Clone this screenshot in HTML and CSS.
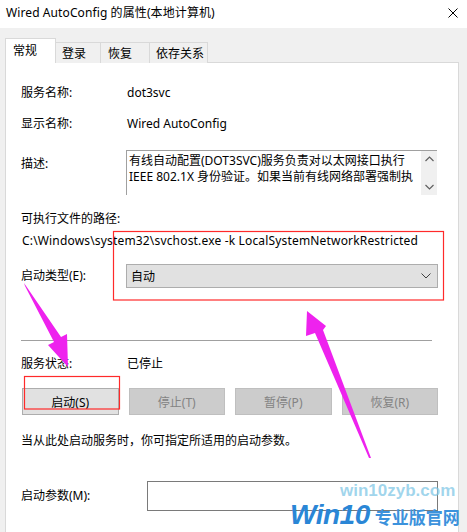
FILE: index.html
```html
<!DOCTYPE html>
<html lang="zh-CN">
<head>
<meta charset="utf-8">
<title>Wired AutoConfig 的属性(本地计算机)</title>
<link rel="stylesheet" href="styles.css">
</head>
<body>
<div class="window">
  <div class="titlebar">
    <span class="title">Wired AutoConfig 的属性(本地计算机)</span>
    <svg class="close" width="10" height="10" viewBox="0 0 10 10"><path d="M0.5 0.5 L9.5 9.5 M9.5 0.5 L0.5 9.5" stroke="#000" stroke-width="1" fill="none"/></svg>
  </div>
  <div class="tabs">
    <div class="tab tab-active w1">常规</div>
    <div class="tab w2">登录</div>
    <div class="tab w3">恢复</div>
    <div class="tab w4">依存关系</div>
  </div>
  <div class="panel">
    <div class="row r-name"><span class="label">服务名称:</span><span class="value">dot3svc</span></div>
    <div class="row r-display"><span class="label">显示名称:</span><span class="value">Wired AutoConfig</span></div>
    <div class="row r-desc">
      <span class="label desc-label">描述:</span>
      <div class="desc-box">
        <div class="desc-text">
          <div>有线自动配置(DOT3SVC)服务负责对以太网接口执行</div>
          <div>IEEE 802.1X 身份验证。如果当前有线网络部署强制执</div>
        </div>
        <div class="scrollbar">
          <svg width="9" height="6" viewBox="0 0 9 6"><path d="M0.5 5 L4.5 1 L8.5 5" stroke="#606060" stroke-width="1.2" fill="none"/></svg>
          <svg width="9" height="6" viewBox="0 0 9 6"><path d="M0.5 1 L4.5 5 L8.5 1" stroke="#606060" stroke-width="1.2" fill="none"/></svg>
        </div>
      </div>
    </div>
    <div class="plain r-pathlabel">可执行文件的路径:</div>
    <div class="plain r-path">C:\Windows\system32\svchost.exe -k LocalSystemNetworkRestricted</div>
    <div class="row r-type">
      <span class="label">启动类型(E):</span>
      <div class="combo"><span>自动</span>
        <svg width="10" height="6" viewBox="0 0 10 6"><path d="M0.5 0.5 L5 5 L9.5 0.5" stroke="#404040" stroke-width="1" fill="none"/></svg>
      </div>
    </div>
    <div class="separator"></div>
    <div class="row r-status"><span class="label">服务状态:</span><span class="value">已停止</span></div>
    <div class="buttons">
      <div class="btn">启动(S)</div>
      <div class="btn btn-disabled">停止(T)</div>
      <div class="btn btn-disabled">暂停(P)</div>
      <div class="btn btn-disabled">恢复(R)</div>
    </div>
    <div class="plain r-hint">当从此处启动服务时，你可指定所适用的启动参数。</div>
    <div class="row r-param">
      <span class="label label-wide">启动参数(M):</span>
      <div class="input"></div>
    </div>
  </div>

  <div class="watermark">
    <div class="wm-url">win10zyb.com</div>
    <div class="wm-brand"><span class="wm-win">Win10</span><span class="wm-cn">专业版官网</span></div>
  </div>

  <svg class="annot" width="467" height="532" viewBox="0 0 467 532">
    <rect x="113.5" y="231.5" width="330" height="68.5" fill="none" stroke="#ff2a2a" stroke-width="1.2"/>
    <rect x="24.5" y="376.5" width="95" height="32.5" fill="none" stroke="#ff2a2a" stroke-width="1.2"/>
    <polygon points="24,283 61,337 67,334 68,367 48,345 54,342 25,286" fill="#ee22ee"/>
    <polygon points="371,458 323,330 326,326 307,311 306,336 315,333 369,458" fill="#ee22ee"/>
  </svg>
</div>
</body>
</html>
```
FILE: styles.css
```css
* { box-sizing: border-box; }
html, body { margin: 0; padding: 0; }
body {
  width: 467px;
  height: 532px;
  overflow: hidden;
  background: #f0f0f0;
  font-family: "Noto Sans", "Noto Sans CJK SC", sans-serif;
  font-size: 12px;
  color: #000;
}
.window {
  position: relative;
  width: 467px;
  height: 532px;
  overflow: hidden;
}
.titlebar {
  height: 28px;
  background: #fff;
  display: flex;
  align-items: center;
  justify-content: space-between;
  padding: 0 9px 2px 6px;
}
.title { font-size: 12px; line-height: 16px; letter-spacing: 0.1px; }
.close { display: block; }

.tabs {
  display: flex;
  align-items: flex-end;
  height: 34px;
  padding-left: 5px;
  position: relative;
  z-index: 2;
}
.tab {
  height: 21px;
  margin-bottom: -1px;
  background: #f0f0f0;
  border: 1px solid #d9d9d9;
  border-bottom: none;
  border-left: none;
  padding: 3px 0 0 6px;
  line-height: 16px;
}
.tab-active {
  height: 25px;
  background: #fff;
  border-left: 1px solid #d9d9d9;
  padding: 4px 0 0 7px;
}
.w1 { width: 51px; }
.w2 { width: 45px; }
.w3 { width: 49px; padding-left: 7px; }
.w4 { width: 58px; }

.panel {
  position: relative;
  z-index: 1;
  margin-left: 5px;
  width: 454px;
  height: 480px;
  background: #fff;
  border: 1px solid #d9d9d9;
  border-bottom: none;
  padding: 22px 0 0 15px;
}
.row { display: flex; align-items: center; }
.label { width: 105px; flex: none; line-height: 16px; }
.value { line-height: 16px; padding-left: 1px; }
.plain { line-height: 16px; }

.r-name { height: 16px; }
.r-display { height: 16px; margin-top: 15px; }
.r-desc { align-items: flex-start; margin-top: 18px; height: 45px; }
.desc-label { padding-top: 6px; }
.desc-box {
  width: 311px;
  height: 45px;
  border-top: 1px solid #a0a0a0;
  border-left: 1px solid #a0a0a0;
  display: flex;
}
.desc-text {
  flex: 1;
  overflow: hidden;
  white-space: nowrap;
  padding: 2px 0 0 2px;
  line-height: 16px;
}
.scrollbar {
  width: 16px;
  flex: none;
  background: #f0f0f0;
  display: flex;
  flex-direction: column;
  justify-content: space-between;
  align-items: center;
  padding: 5px 0 5px;
}
.scrollbar svg { display: block; }

.r-pathlabel { margin-top: 16px; }
.r-path { margin-top: 6px; padding-left: 1px; white-space: nowrap; letter-spacing: 0.17px; }

.r-type { margin-top: 15px; height: 24px; }
.combo {
  width: 312px;
  height: 24px;
  background: #e1e1e1;
  border: 1px solid #adadad;
  display: flex;
  align-items: center;
  justify-content: space-between;
  padding: 0 6px 0 4px;
}

.separator {
  margin-top: 52px;
  width: 411px;
  height: 1px;
  background: #a0a0a0;
}
.r-status { margin-top: 15px; height: 16px; }

.buttons {
  margin-top: 16px;
  margin-left: 1px;
  width: 416px;
  display: grid;
  grid-template-columns: repeat(4, 1fr);
  gap: 10px;
}
.btn {
  height: 27px;
  background: #e1e1e1;
  border: 1px solid #adadad;
  display: flex;
  align-items: center;
  justify-content: center;
}
.btn-disabled {
  background: #cccccc;
  border-color: #bfbfbf;
  color: #838383;
}

.r-hint { margin-top: 18px; }
.r-param { margin-top: 32px; height: 30px; }
.label-wide { width: 126px; }
.input {
  width: 291px;
  height: 30px;
  border: 1px solid #7a7a7a;
  background: #fff;
}

.watermark {
  position: absolute;
  left: 290px;
  top: 480px;
  width: 177px;
  z-index: 5;
}
.wm-url {
  font-family: "Liberation Sans", Arial, sans-serif;
  font-weight: bold;
  font-size: 17px;
  color: rgba(130, 200, 230, 0.75);
  padding-left: 50px;
  line-height: 22px;
}
.wm-brand {
  display: flex;
  align-items: baseline;
  margin-top: -2px;
}
.wm-win {
  font-family: "Liberation Sans", Arial, sans-serif;
  font-weight: bold;
  font-style: italic;
  font-size: 28px;
  line-height: 30px;
  color: #2a86d6;
  letter-spacing: -0.5px;
}
.wm-cn {
  font-family: "Noto Sans CJK SC", sans-serif;
  font-weight: bold;
  font-size: 17px;
  color: #3c92dc;
  margin-left: 5px;
}
.annot {
  position: absolute;
  left: 0;
  top: 0;
  z-index: 6;
  pointer-events: none;
}
```
